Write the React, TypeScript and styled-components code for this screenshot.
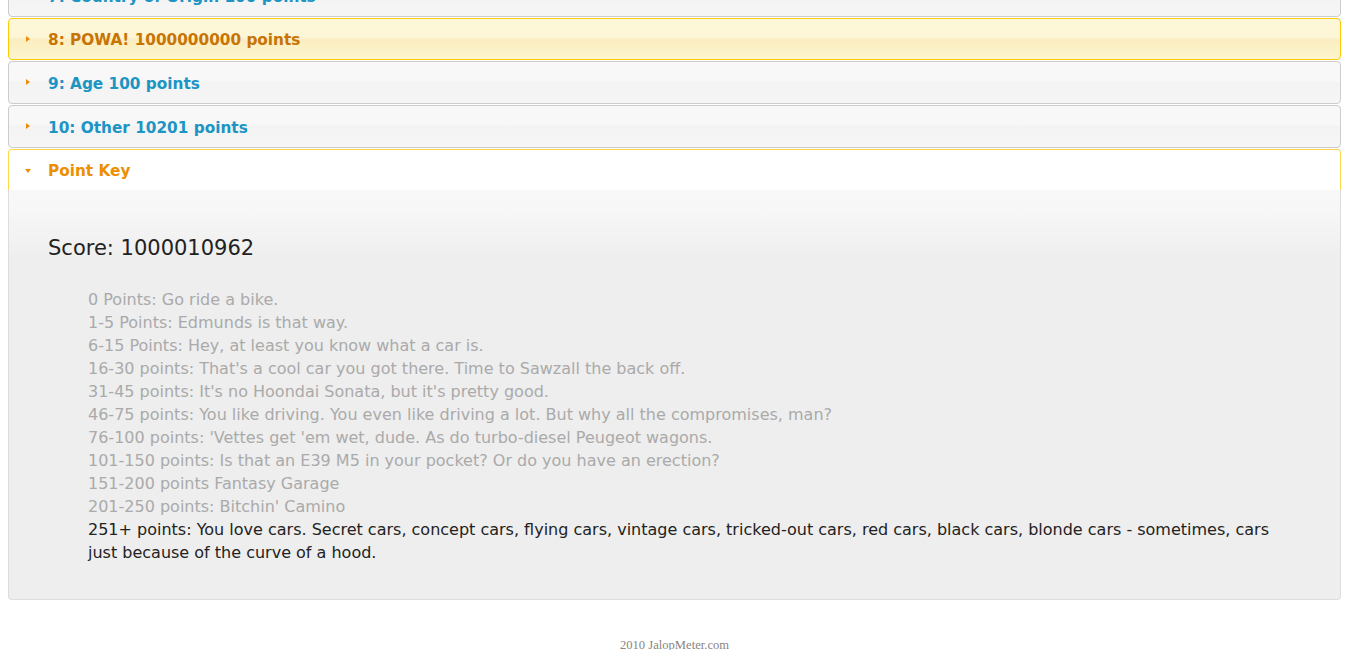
import React from "react";
import styled, { createGlobalStyle } from "styled-components";

const Global = createGlobalStyle`
  html, body { margin: 0; padding: 0; background: #fff; }
  body { padding: 8px; font-family: "DejaVu Sans", "Trebuchet MS", sans-serif; }
`;

const Scroller = styled.div`
  margin-top: -35px;
`;

const Accordion = styled.div`
  font-size: 16px;
`;

type State = "default" | "hover" | "active";

const Header = styled.div<{ $state: State }>`
  display: flex;
  align-items: center;
  height: 38.2px;
  padding-top: 2.5px;
  margin-top: 1px;
  padding-left: 39px;
  position: relative;
  border: 1px solid
    ${(p) => (p.$state === "default" ? "#cccccc" : p.$state === "hover" ? "#fbcb09" : "#fbd850")};
  border-radius: ${(p) => (p.$state === "active" ? "4px 4px 0 0" : "4px")};
  border-bottom-width: ${(p) => (p.$state === "active" ? "0" : "1px")};
  background: ${(p) =>
    p.$state === "default"
      ? "linear-gradient(#f8f8f8 0%, #f8f8f8 45%, #f3f3f3 50%, #f6f6f6 100%)"
      : p.$state === "hover"
      ? "linear-gradient(#fdf7d9 0%, #fdf6d6 45%, #fbedc1 52%, #fdf5ce 100%)"
      : "#ffffff"};
  color: ${(p) => (p.$state === "default" ? "#1c94c4" : p.$state === "hover" ? "#c77405" : "#eb8f00")};
  font-weight: bold;
  font-size: 15.3px;
  cursor: pointer;
`;

const Icon = styled.span<{ $open: boolean }>`
  position: absolute;
  left: 16px;
  top: 50%;
  width: 0;
  height: 0;
  ${(p) =>
    p.$open
      ? `margin-top: -1px; border-left: 3.5px solid transparent; border-right: 3.5px solid transparent; border-top: 4px solid #ef8c08;`
      : `margin-top: -3.5px; margin-left: 1px; border-top: 3.5px solid transparent; border-bottom: 3.5px solid transparent; border-left: 4px solid #ef8c08;`}
`;

const Content = styled.div`
  border: 1px solid #dddddd;
  border-top: 0;
  border-radius: 0 0 4px 4px;
  background: linear-gradient(#f8f8f8 0px, #f7f7f7 20px, #eeeeee 70px, #eeeeee 100%);
  color: #333;
  padding: 46px 39px 19px 39px;
`;

const Score = styled.div`
  font-size: 21px;
  color: #222;
  margin-bottom: 28px;
`;

const KeyList = styled.ul`
  list-style: none;
  margin: 0 0 16px 0;
  padding: 0 0 0 40px;
  font-size: 16px;
  line-height: 23px;
`;

const KeyItem = styled.li<{ $hit: boolean }>`
  color: ${(p) => (p.$hit ? "#222" : "#aaaaaa")};
`;

const Footer = styled.div`
  text-align: center;
  margin-top: 38px;
  font-family: "Liberation Serif", serif;
  font-size: 12.6px;
  color: #8a8580;
`;

const headers: { label: string; state: State }[] = [
  { label: "7: Country of Origin 100 points", state: "default" },
  { label: "8: POWA! 1000000000 points", state: "hover" },
  { label: "9: Age 100 points", state: "default" },
  { label: "10: Other 10201 points", state: "default" },
];

const keys = [
  "0 Points: Go ride a bike.",
  "1-5 Points: Edmunds is that way.",
  "6-15 Points: Hey, at least you know what a car is.",
  "16-30 points: That's a cool car you got there. Time to Sawzall the back off.",
  "31-45 points: It's no Hoondai Sonata, but it's pretty good.",
  "46-75 points: You like driving. You even like driving a lot. But why all the compromises, man?",
  "76-100 points: 'Vettes get 'em wet, dude. As do turbo-diesel Peugeot wagons.",
  "101-150 points: Is that an E39 M5 in your pocket? Or do you have an erection?",
  "151-200 points Fantasy Garage",
  "201-250 points: Bitchin' Camino",
  "251+ points: You love cars. Secret cars, concept cars, flying cars, vintage cars, tricked-out cars, red cars, black cars, blonde cars - sometimes, cars just because of the curve of a hood.",
];

export default function App() {
  return (
    <>
      <Global />
      <Scroller>
        <Accordion>
          {headers.map((h) => (
            <Header key={h.label} $state={h.state}>
              <Icon $open={false} />
              {h.label}
            </Header>
          ))}
          <Header $state="active">
            <Icon $open={true} />
            Point Key
          </Header>
          <Content>
            <Score>Score: 1000010962</Score>
            <KeyList>
              {keys.map((k, i) => (
                <KeyItem key={i} $hit={i === keys.length - 1}>
                  {k}
                </KeyItem>
              ))}
            </KeyList>
          </Content>
        </Accordion>
        <Footer>2010 JalopMeter.com</Footer>
      </Scroller>
    </>
  );
}
